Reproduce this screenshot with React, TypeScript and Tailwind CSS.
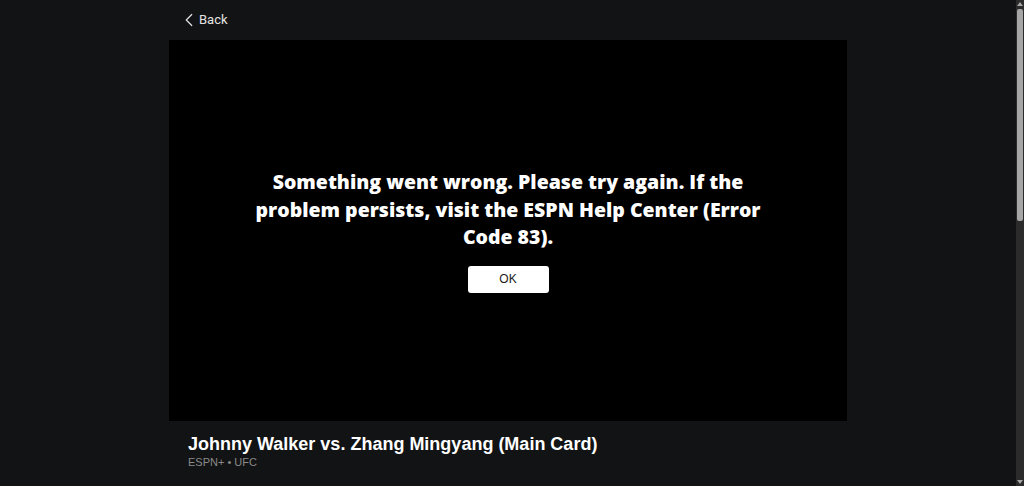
import { ChevronLeft } from "lucide-react";

export default function App() {
  return (
    <div className="flex h-screen bg-[#121314] [font-family:'Liberation_Sans',Arial,sans-serif]">
      <div className="flex-1 overflow-hidden">
        <main className="mx-auto w-[678px]">
          <header className="flex h-10 items-center pl-[9px]">
            <button className="flex items-center text-[13px] text-[#e3e3e3] [font-family:Roboto,sans-serif]">
              <ChevronLeft className="h-[22px] w-[22px]" strokeWidth={1.3} />
              <span className="-ml-[1px]">Back</span>
            </button>
          </header>

          <section className="flex aspect-video w-full flex-col items-center justify-center bg-black">
            <p className="w-[512px] text-center text-[19.5px] leading-[27.5px] font-extrabold text-white [font-family:'Open_Sans',sans-serif]">
              Something went wrong. Please try again. If the problem persists,
              visit the ESPN Help Center (Error Code 83).
            </p>
            <button className="mt-[15px] h-[27px] w-[81px] rounded-[3px] bg-white text-[12px] font-medium text-[#1a1a1a]">
              OK
            </button>
          </section>

          <div className="px-[19px] pt-[12px]">
            <h1 className="text-[18px] leading-[22px] font-bold text-white">
              Johnny Walker vs. Zhang Mingyang (Main Card)
            </h1>
            <p className="text-[11px] leading-[14px] text-[#8a8a8a]">ESPN+ • UFC</p>
          </div>
        </main>
      </div>

      {/* scrollbar */}
      <div className="flex w-[8px] flex-col items-center bg-[#2b2b2b]">
        <span className="mt-[2px] h-0 w-0 border-x-[3px] border-b-[4px] border-x-transparent border-b-[#a6a6a6]" />
        <div className="mt-[3px] h-[212px] w-[6px] rounded-[2px] bg-[#a6a6a6]" />
        <span className="mt-auto mb-[2px] h-0 w-0 border-x-[3px] border-t-[4px] border-x-transparent border-t-[#a6a6a6]" />
      </div>
    </div>
  );
}
